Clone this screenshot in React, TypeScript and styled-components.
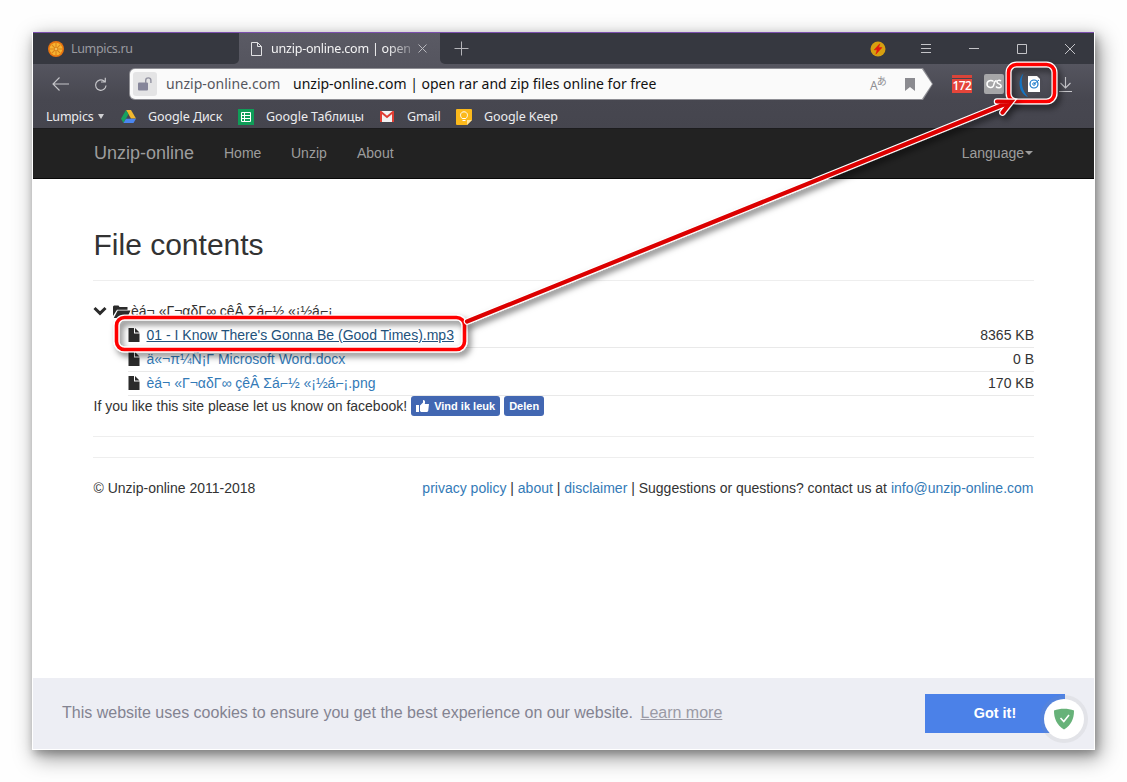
import React from "react";
import styled, { createGlobalStyle } from "styled-components";

const GlobalStyle = createGlobalStyle`
  *, *::before, *::after { box-sizing: border-box; }
  html, body { margin: 0; padding: 0; background: #fff; overflow: hidden; }
  body { font-family: "Liberation Sans", Arial, sans-serif; }
  a { text-decoration: none; color: #337ab7; }
  svg { display: block; flex: none; }
`;

const Stage = styled.div`
  position: relative;
  width: 1127px;
  height: 782px;
  padding: 32px 0 0 32px;
  overflow: hidden;
  background: #fefefe;
`;

const Window = styled.div`
  display: flex;
  flex-direction: column;
  width: 1063px;
  height: 718px;
  background: #fff;
  padding: 0 1px 1px;
  box-shadow: 4px 7px 20px 1px rgba(0, 0, 0, 0.4), 2px 4px 8px rgba(0, 0, 0, 0.25);
`;

const Chrome = styled.div`
  flex: none;
  height: 97px;
  background: linear-gradient(#5a5a64 0, #55555f 32px, #474750 66px, #45454e 96px);
  border-top: 1px solid #7b4fae;
  border-bottom: 1px solid #1c1c1e;
  font-family: "Noto Sans", "Open Sans", "Noto Sans CJK JP", sans-serif;
`;

const TabStrip = styled.div`
  display: flex;
  height: 31px;
`;

const StripSection = styled.div<{ $w?: number; $side: "left" | "right" }>`
  display: flex;
  align-items: center;
  width: ${(p) => (p.$w ? `${p.$w}px` : "auto")};
  flex: ${(p) => (p.$w ? "none" : 1)};
  background: #363840;
  border-radius: ${(p) => (p.$side === "left" ? "0 0 5px 0" : "0 0 0 5px")};
  padding-left: ${(p) => (p.$side === "left" ? 15 : 14)}px;
`;

const ActiveTab = styled.div`
  display: flex;
  align-items: center;
  width: 201px;
  padding-left: 12px;
`;

const TabLabel = styled.span<{ $active?: boolean; $ls: number }>`
  font-size: 12.5px;
  line-height: 18px;
  letter-spacing: ${(p) => p.$ls}px;
  color: ${(p) => (p.$active ? "#f4f4f5" : "#9a9ba0")};
  white-space: nowrap;
  width: 140px;
  margin-left: ${(p) => (p.$active ? 9 : 7)}px;
  ${(p) => p.$active && "-webkit-mask-image: linear-gradient(90deg, #000 116px, rgba(0,0,0,.3) 140px);"}
`;

const WindowControls = styled.div`
  display: flex;
  align-items: center;
  margin-left: auto;
  padding-right: 18px;
  gap: 32px;
  & > :last-child { margin-left: 2px; }
`;

const Toolbar = styled.div`
  display: flex;
  align-items: center;
  height: 40px;
  padding-left: 19px;
`;

const AddressBar = styled.div`
  position: relative;
  display: flex;
  align-items: center;
  width: 804px;
  height: 32px;
  margin-left: 21px;
  padding-left: 4px;
  background: #8e8e94;
  clip-path: polygon(0 0, 794px 0, 804px 16px, 794px 32px, 0 32px);
  border-radius: 6px 0 0 6px;
  isolation: isolate;
  &::before {
    content: "";
    position: absolute;
    z-index: -1;
    inset: 1px;
    background: #fafafa;
    border-radius: 5px 0 0 5px;
    clip-path: polygon(0 0, 792px 0, 802px 15px, 792px 30px, 0 30px);
  }
`;

const LockBox = styled.div`
  display: flex;
  align-items: center;
  justify-content: center;
  width: 24px;
  height: 24px;
  border-radius: 3px;
  background: #e4e4e5;
`;

const UrlText = styled.span<{ $muted?: boolean; $w: number; $ls: number }>`
  width: ${(p) => p.$w}px;
  flex: none;
  font-size: 14px;
  line-height: 20px;
  letter-spacing: ${(p) => p.$ls}px;
  color: ${(p) => (p.$muted ? "#55565e" : "#111")};
  white-space: nowrap;
`;

const Translate = styled.div`
  display: flex;
  align-items: flex-start;
  margin-left: auto;
  width: 17px;
  padding-top: 4px;
  color: #8f8f93;
  font-size: 12px;
  line-height: 20px;
  sup { font-size: 10px; line-height: 10px; margin-left: -1px; }
`;

const Extensions = styled.div`
  display: flex;
  align-items: center;
  margin-left: 19px;
`;

const MailBadge = styled.div`
  display: flex;
  align-items: flex-end;
  justify-content: center;
  width: 20px;
  height: 18px;
  background: linear-gradient(#d94439 0 3px, #45454e 3px 4px, #e5453a 4px);
  color: #fff;
  font: 600 12px/14px "Open Sans", sans-serif;
  letter-spacing: -0.6px;
`;

const ScrobbleBadge = styled.div`
  width: 20px;
  height: 20px;
  margin-left: 12px;
  border-radius: 2px;
  background: #a6a6a8;
`;

const Bookmarks = styled.div`
  display: flex;
  align-items: center;
  height: 24px;
  padding: 1px 0 0 13px;
`;

const Bookmark = styled.div<{ $w: number; $gap: number; $ls?: number }>`
  display: flex;
  align-items: center;
  width: ${(p) => p.$w}px;
  gap: ${(p) => p.$gap}px;
  flex: none;
  font-size: 12.5px;
  line-height: 18px;
  letter-spacing: ${(p) => p.$ls ?? 0}px;
  color: #ececee;
  white-space: nowrap;
`;

const SiteNav = styled.nav`
  display: flex;
  align-items: center;
  flex: none;
  height: 50px;
  padding: 0 61px 1px;
  background: #222;
  border-bottom: 1px solid #080808;
  color: #9d9d9d;
`;

const Brand = styled.span`
  width: 130px;
  font-size: 18px;
`;

const NavLink = styled.span<{ $w: number }>`
  width: ${(p) => p.$w}px;
  font-size: 14px;
`;

const LanguageMenu = styled.span`
  display: flex;
  align-items: center;
  margin-left: auto;
  font-size: 14px;
  &::after {
    content: "";
    margin-left: 1px;
    border-top: 4px solid;
    border-left: 4px solid transparent;
    border-right: 4px solid transparent;
  }
`;

const Content = styled.main`
  flex: 1;
  padding: 49px 60px 0;
  font-size: 14px;
  line-height: 20px;
  color: #333;
`;

const Title = styled.h2`
  margin: 0;
  padding-left: 0.5px;
  height: 53px;
  font-size: 30px;
  line-height: 33px;
  font-weight: 400;
  border-bottom: 1px solid #eee;
`;

const FolderRow = styled.div`
  display: flex;
  align-items: center;
  height: 24px;
  margin-top: 19px;
  padding-bottom: 2px;
`;

const FileRow = styled.div`
  display: flex;
  align-items: center;
  height: 24px;
  margin-left: 35px;
  border-bottom: 1px solid #e9e9e9;
  padding-bottom: 1px;
`;

const FileLink = styled.a<{ $hover?: boolean }>`
  margin-left: 6.5px;
  color: ${(p) => (p.$hover ? "#23527c" : "#337ab7")};
  text-decoration: ${(p) => (p.$hover ? "underline" : "none")};
`;

const FileSize = styled.span`
  margin-left: auto;
`;

const SocialLine = styled.div`
  display: flex;
  align-items: center;
  height: 20px;
  padding-left: 0.5px;
`;

const SocialButton = styled.span<{ $w: number }>`
  display: flex;
  align-items: center;
  justify-content: center;
  gap: 5px;
  width: ${(p) => p.$w}px;
  height: 20px;
  margin-left: 4px;
  border-radius: 3px;
  background: #4267b2;
  color: #fff;
  font-size: 11px;
  font-weight: 700;
`;

const Rule = styled.hr`
  margin: 20px 0 0;
  border: 0;
  border-top: 1px solid #eee;
`;

const Footer = styled.footer`
  display: flex;
  justify-content: space-between;
  margin-top: 20px;
  padding: 0 0.5px;
`;

const CookieBar = styled.div`
  display: flex;
  align-items: center;
  flex: none;
  height: 71px;
  padding: 0 29px;
  background: #edeef4;
  color: #838391;
  font-size: 16px;
`;

const CookieMessage = styled.span`
  padding-bottom: 2px;
`;

const LearnMore = styled.span`
  margin-left: 7.5px;
  color: #9a9aa5;
  text-decoration: underline;
`;

const GotIt = styled.div`
  position: relative;
  width: 140px;
  height: 39px;
  margin-left: auto;
  background: #4b81e8;
  color: #fff;
  font: 700 14.4px/39px "Liberation Sans", Arial, sans-serif;
  text-align: center;
`;

const ShieldBadge = styled.div`
  position: absolute;
  left: 119px;
  top: 5px;
  display: flex;
  align-items: center;
  justify-content: center;
  width: 40px;
  height: 40px;
  border-radius: 50%;
  background: #fff;
  box-shadow: 0 0 0 4px rgba(150, 150, 150, 0.12);
`;

const Annotation = styled.svg`
  position: absolute;
  left: 0;
  top: 0;
  pointer-events: none;
`;

const FileIcon = () => (
  <svg width="12" height="14" viewBox="0 0 12 14" fill="#2b2b2b">
    <path d="M.5 0H6v5.500h5.500V14H.5z" />
    <path d="M7 0l4.500 4.500H7z" />
  </svg>
);

const files = [
  { name: "01 - I Know There's Gonna Be (Good Times).mp3", size: "8365 KB", hover: true },
  { name: "ä«¬π¼Ñ¡Γ Microsoft Word.docx", size: "0 B" },
  { name: "èá¬ «Γ¬αδΓ∞ çêÂ Σá⌐½ «¡½á⌐¡.png", size: "170 KB" },
];

export default function App() {
  return (
    <Stage>
      <GlobalStyle />
      <Window>
        <Chrome>
          <TabStrip>
            <StripSection $w={206} $side="left">
              <svg width="16" height="16" viewBox="0 0 16 16">
                <circle cx="8" cy="8" r="8" fill="#e8750f" />
                <circle cx="8" cy="8" r="6.3" fill="#f7b431" />
                <path d="M8 2v12M2 8h12M3.8 3.8l8.4 8.4M12.2 3.8l-8.4 8.4" stroke="#d9821c" strokeWidth="1.1" />
                <circle cx="8" cy="8" r="1" fill="#f9d070" />
              </svg>
              <TabLabel $ls={-0.35}>Lumpics.ru</TabLabel>
            </StripSection>
            <ActiveTab>
              <svg width="11" height="14" viewBox="0 0 11 14" fill="none" stroke="#e2e2e4">
                <path d="M.5.5h6l4 4v9H.5zM6.5.5v4h4" />
              </svg>
              <TabLabel $active $ls={-0.22}>unzip-online.com | open</TabLabel>
              <svg width="9" height="9" viewBox="0 0 9 9" stroke="#b9b9be" style={{ marginLeft: 7 }}>
                <path d="M.5.5l8 8M8.5.5l-8 8" />
              </svg>
            </ActiveTab>
            <StripSection $side="right">
              <svg width="15" height="15" viewBox="0 0 15 15" stroke="#b5b5ba">
                <path d="M7.5 0.5v14M.5 7.5h14" />
              </svg>
              <WindowControls>
                <svg width="16" height="16" viewBox="0 0 16 16">
                  <circle cx="8" cy="8" r="7.5" fill="#d7a010" />
                  <path d="M9.800 2.800L4.200 8.800h3l-1.300 4.400 6-6.600H8.600z" fill="#e0190f" stroke="#e0190f" strokeWidth=".6" />
                </svg>
                <svg width="16" height="12" viewBox="0 0 16 12" stroke="#c4c4c8">
                  <path d="M3 1.500h10M3 5.500h10M3 9.500h10" />
                </svg>
                <svg width="16" height="12" viewBox="0 0 16 12" stroke="#c4c4c8">
                  <path d="M3 5.500h10" />
                </svg>
                <svg width="16" height="12" viewBox="0 0 16 12" fill="none" stroke="#c4c4c8">
                  <path d="M3.500 1.500h9v9h-9z" />
                </svg>
                <svg width="12" height="12" viewBox="0 0 12 12" stroke="#c4c4c8">
                  <path d="M1 1l10 10M11 1L1 11" />
                </svg>
              </WindowControls>
            </StripSection>
          </TabStrip>
          <Toolbar>
            <svg width="17" height="14" viewBox="0 0 17 14" fill="none" stroke="#c6c6ca" strokeWidth="1.1">
              <path d="M1 7h16M7.500 .5L1 7l6.500 6.500" />
            </svg>
            <svg width="14" height="15" viewBox="0 0 14 15" fill="none" stroke="#c6c6ca" strokeWidth="1.2" style={{ marginLeft: 25 }}>
              <path d="M12 8.500a5.200 5.200 0 1 1-2.300-4.700L11 4.800M11.300 .8v4.200H7" />
            </svg>
            <AddressBar>
              <LockBox>
                <svg width="14" height="14" viewBox="0 0 14 14">
                  <rect x="0" y="5.500" width="10" height="8" rx="1" fill="#86869a" />
                  <path d="M7.700 6V3.500a2.600 2.600 0 0 1 5.200 0V6" fill="none" stroke="#9292a0" strokeWidth="1.400" />
                </svg>
              </LockBox>
              <UrlText $muted $w={127} $ls={0.05} style={{ marginLeft: 9 }}>unzip-online.com</UrlText>
              <UrlText $w={380} $ls={0}>unzip-online.com | open rar and zip files online for free</UrlText>
              <Translate>A<sup>あ</sup></Translate>
              <svg width="10" height="13" viewBox="0 0 10 13" style={{ margin: "0 18px 0 18px" }}>
                <path d="M0 0h10v13L5 9l-5 4z" fill="#8b8b90" />
              </svg>
            </AddressBar>
            <Extensions>
              <MailBadge>172</MailBadge>
              <ScrobbleBadge>
                <svg width="20" height="20" viewBox="0 0 20 20" fill="none" stroke="#fff" strokeWidth="1.500">
                  <path d="M9.500 7.500C7.500 5.800 3 6.300 3 10s4.500 4.200 6 2.500C10.500 11 9.500 7 12.500 6.500M17 7c-1.500-1.200-4-.8-4 1 0 2.300 4.200 1.400 4.200 4 0 2.300-4 2.200-5.200.5" />
                </svg>
              </ScrobbleBadge>
              <svg width="30" height="30" viewBox="0 0 30 30" style={{ marginLeft: 12 }}>
                <circle cx="15" cy="15" r="12" fill="#4c4c55" />
                <path d="M7.500 4.500C1.500 9.500 2 24 12 28 7 22.500 3.500 13 7.500 4.500z" fill="#1474c4" />
                <path d="M12 7h9l3 3v13H12z" fill="#fff" />
                <circle cx="18" cy="15" r="4" fill="none" stroke="#1676c8" strokeWidth="1.200" />
                <circle cx="18" cy="15" r="1.300" fill="none" stroke="#1676c8" strokeWidth=".9" />
                <path d="M18 15l5-4" stroke="#1676c8" />
              </svg>
              <svg width="13" height="15" viewBox="0 0 13 15" fill="none" stroke="#c6c6ca" strokeWidth="1.100" style={{ marginLeft: 13 }}>
                <path d="M6.500 0v11M1.500 6l5 5 5-5M0 14.500h13" />
              </svg>
            </Extensions>
          </Toolbar>
          <Bookmarks>
            <Bookmark $w={75} $gap={5} $ls={-0.2}>
              Lumpics
              <svg width="6" height="5" viewBox="0 0 6 5"><path d="M0 0h6L3 5z" fill="#d0d0d3" /></svg>
            </Bookmark>
            <Bookmark $w={117} $gap={12} $ls={-0.08}>
              <svg width="15" height="13" viewBox="0 0 15 13">
                <path d="M5 0h5l5 8.500h-5z" fill="#f1b82d" />
                <path d="M5 0l2.500 4.300L2.500 13 0 8.700z" fill="#17a15f" />
                <path d="M5 8.700h10L12.500 13h-10z" fill="#4a86f0" />
              </svg>
              Google Диск
            </Bookmark>
            <Bookmark $w={142} $gap={12} $ls={-0.05}>
              <svg width="16" height="16" viewBox="0 0 16 16">
                <path fill="#0f9d58" d="M0 0h16v16H0z" />
                <path fill="none" stroke="#fff" d="M3.500 3.500h9v9h-9zM3.500 6.500h9M3.500 9.500h9M6.500 3.500v9" />
              </svg>
              Google Таблицы
            </Bookmark>
            <Bookmark $w={76} $gap={13} $ls={-0.15}>
              <svg width="14" height="11" viewBox="0 0 14 11">
                <path fill="#f2f2f2" d="M0 0h14v11H0z" />
                <path fill="none" stroke="#e03d33" strokeWidth="2" d="M1 11V1l6 5 6-5v10" />
              </svg>
              Gmail
            </Bookmark>
            <Bookmark $w={120} $gap={12} $ls={-0.1}>
              <svg width="16" height="16" viewBox="0 0 16 16">
                <path fill="#fbb91c" d="M1 0h14a1 1 0 0 1 1 1v10l-5 5H1a1 1 0 0 1-1-1V1a1 1 0 0 1 1-1z" />
                <path fill="#fde3a0" d="M11 16v-5h5z" />
                <path fill="none" stroke="#fff" d="M6.200 9.500C3.300 7 4.400 2.800 8 2.800s4.700 4.200 1.800 6.700zM6.500 11.500h3" />
              </svg>
              Google Keep
            </Bookmark>
          </Bookmarks>
        </Chrome>
        <SiteNav>
          <Brand>Unzip-online</Brand>
          <NavLink $w={67}>Home</NavLink>
          <NavLink $w={66}>Unzip</NavLink>
          <NavLink $w={66}>About</NavLink>
          <LanguageMenu>Language</LanguageMenu>
        </SiteNav>
        <Content>
          <Title>File contents</Title>
          <FolderRow>
            <svg width="14" height="10" viewBox="0 0 14 10" fill="none" stroke="#2b2b2b" strokeWidth="3">
              <path d="M1.500 2L7 7.300 12.500 2" />
            </svg>
            <svg width="19" height="13" viewBox="0 0 18 13" fill="#2b2b2b" style={{ marginLeft: 5 }}>
              <path d="M.5 11V1.500L1.500 .5H6l1 1.500h8v2.800H4.500z" />
              <path d="M5.200 5.500H18L14.500 13H1.300z" />
            </svg>
            <span>èá¬ «Γ¬αδΓ∞ çêÂ Σá⌐½ «¡½á⌐¡</span>
          </FolderRow>
          {files.map((f) => (
            <FileRow key={f.name}>
              <FileIcon />
              <FileLink $hover={f.hover}>{f.name}</FileLink>
              <FileSize>{f.size}</FileSize>
            </FileRow>
          ))}
          <SocialLine>
            If you like this site please let us know on facebook!
            <SocialButton $w={89}>
              <svg width="13" height="12" viewBox="0 0 13 12" fill="#fff">
                <path d="M0 5h3v7H0zM4 5.500L7 2.500V0c2 0 2.500 1.500 1.800 4H13l-.8 7-1 1H5l-1-1z" />
              </svg>
              Vind ik leuk
            </SocialButton>
            <SocialButton $w={40}>Delen</SocialButton>
          </SocialLine>
          <Rule />
          <Rule />
          <Footer>
            <span>© Unzip-online 2011-2018</span>
            <span>
              <a>privacy policy</a> | <a>about</a> | <a>disclaimer</a> | Suggestions or questions? contact us at{" "}
              <a>info@unzip-online.com</a>
            </span>
          </Footer>
        </Content>
        <CookieBar>
          <CookieMessage>
            This website uses cookies to ensure you get the best experience on our website.
            <LearnMore>Learn more</LearnMore>
          </CookieMessage>
          <GotIt>
            Got it!
            <ShieldBadge>
              <svg width="22" height="22" viewBox="0 0 22 22">
                <path d="M11 .8c3.500 0 7 .6 10 1.800 0 8-2.500 14.500-10 19C3.500 17.100 1 10.600 1 2.600 4 1.400 7.500.8 11 .8z" fill="#67b279" />
                <path d="M7.500 10l3.300 3.500L16 7" fill="none" stroke="#fff" strokeWidth="1.600" />
              </svg>
            </ShieldBadge>
          </GotIt>
        </CookieBar>
      </Window>
      <Annotation width="1127" height="782" viewBox="0 0 1127 782" fill="none">
        <defs>
          <filter id="shade" filterUnits="userSpaceOnUse" x="0" y="0" width="1127" height="782">
            <feDropShadow dx="3" dy="4" stdDeviation="3" floodColor="#000" floodOpacity="0.5" />
          </filter>
        </defs>
        <g filter="url(#shade)">
          <rect x="116.500" y="317.500" width="348" height="32" rx="8" stroke="#fff" strokeWidth="6" />
          <rect x="116.500" y="317.500" width="348" height="32" rx="8" stroke="#f00" strokeWidth="3.600" />
        </g>
        <g filter="url(#shade)">
          <rect x="1008.500" y="64.500" width="46" height="37" rx="8" stroke="#fff" strokeWidth="6" />
          <rect x="1008.500" y="64.500" width="46" height="37" rx="8" stroke="#f00" strokeWidth="3.600" />
        </g>
        <g filter="url(#shade)" strokeLinecap="round">
          <path d="M467 321.500L1010 102M997 101.500l14 .2-8.500 10.800" stroke="#fff" strokeWidth="6.500" />
          <path d="M467 321.500L1010 102M997 101.500l14 .2-8.500 10.800" stroke="#dc0000" strokeWidth="4.200" />
        </g>
      </Annotation>
    </Stage>
  );
}
